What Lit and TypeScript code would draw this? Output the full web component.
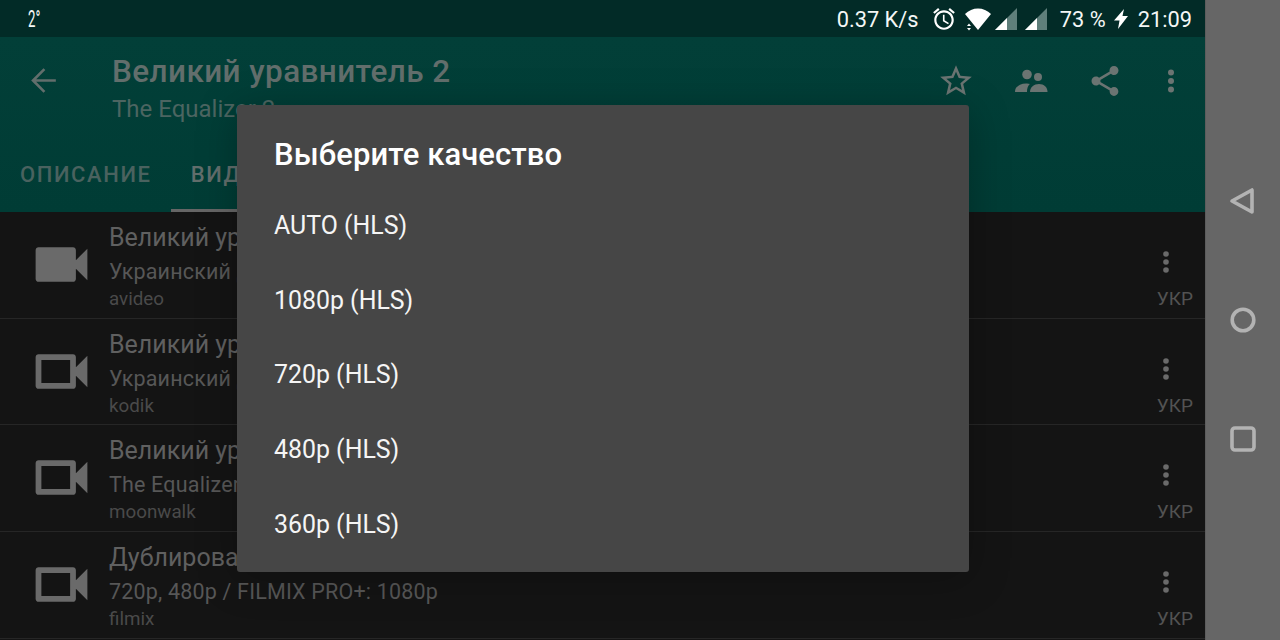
import { LitElement, html, css, svg } from "lit";
import { customElement } from "lit/decorators.js";

const CAM_FILLED = "M17 10.5V7c0-.55-.45-1-1-1H4c-.55 0-1 .45-1 1v10c0 .55.45 1 1 1h12c.55 0 1-.45 1-1v-3.5l4 4v-11l-4 4z";
const CAM_OUTLINE = CAM_FILLED + "M15 16H5V8h10v8z";

const rows = [
  { t: "Великий уравнитель 2", s: "Украинский дубляж", src: "avideo", icon: CAM_FILLED },
  { t: "Великий уравнитель 2", s: "Украинский дубляж", src: "kodik", icon: CAM_OUTLINE },
  { t: "Великий уравнитель 2", s: "The Equalizer 2", src: "moonwalk", icon: CAM_OUTLINE },
  { t: "Дублированный", s: "720p, 480p / FILMIX PRO+: 1080p", src: "filmix", icon: CAM_OUTLINE },
];
const options = ["AUTO (HLS)", "1080p (HLS)", "720p (HLS)", "480p (HLS)", "360p (HLS)"];

const signal = svg`<svg class="sig" viewBox="0 0 22 22"><path d="M22 0V22H0Z" fill="#5f7f7b"/><path d="M12 10V22H0Z" fill="#fff"/></svg>`;

@customElement("app-root")
export class AppRoot extends LitElement {
  static styles = css`
    :host { display: block; width: 1280px; height: 640px; overflow: hidden; position: relative; font-family: Roboto, "Noto Sans", sans-serif; background: #141414; }
    .app { display: flex; height: 640px; }
    .main { width: 1205px; display: flex; flex-direction: column; }
    .status { height: 37px; box-sizing: border-box; background: #022b27; color: #f4f7f6; display: flex; align-items: center; padding: 1px 13px 0 28px; font-size: 21.8px; }
    .temp { font-size: 24px; transform: scaleX(.55); transform-origin: left center; width: 20px; }
    .spacer { flex: 1; }
    .speed { width: 82px; white-space: nowrap; margin-right: 12px; }
    .alarm { width: 26px; height: 26px; margin-right: 7px; }
    .wifi { width: 28px; height: 24px; margin-right: 3px; }
    .sig { width: 22px; height: 22px; margin-right: 8px; }
    .batt { margin-left: 5px; white-space: nowrap; width: 46px; }
    .bolt { width: 16px; height: 22px; margin: 0 9px 0 7px; }
    .bar { height: 175px; background: linear-gradient(#023f38, #003c35); display: flex; flex-direction: column; }
    .top { height: 118px; display: flex; align-items: flex-start; }
    .back { width: 37px; height: 37px; margin: 25px 50px 0 25px; }
    .titles { flex: 1; padding-top: 15px; }
    .title { font-size: 31.5px; font-weight: 500; line-height: 40px; color: #626e6c; letter-spacing: .4px; white-space: nowrap; }
    .sub { font-size: 24px; line-height: 34px; color: #4c6561; white-space: nowrap; }
    .actions { display: flex; align-items: center; margin-top: 25px; padding-right: 30px; }
    .tabs { height: 57px; display: flex; padding-left: 20px; gap: 39px; align-items: stretch; }
    .tab { font-size: 22px; font-weight: 500; letter-spacing: 1.6px; color: #4a625f; line-height: 40px; }
    .tab.on { color: #626e6c; border-bottom: 3px solid #666; margin-left: -20px; padding-left: 20px; width: 130px; height: 54px; white-space: nowrap; }
    .list { flex: 1; display: flex; flex-direction: column; }
    .row { height: 106.67px; box-sizing: border-box; border-bottom: 1px solid #262626; display: flex; flex: none; }
    .cam { width: 69px; height: 69px; margin: 18px 13px 0 27px; flex: none; }
    .texts { flex: 1; padding-top: 8px; min-width: 0; }
    .rt { font-size: 25px; line-height: 35px; color: #606060; white-space: nowrap; }
    .rs { font-size: 21.5px; line-height: 33px; color: #575757; white-space: nowrap; letter-spacing: .18px; }
    .src { font-size: 18.8px; line-height: 22px; color: #4a4a4a; white-space: nowrap; }
    .right { width: 78px; padding-right: 12px; box-sizing: border-box; display: flex; flex-direction: column; align-items: flex-end; flex: none; }
    .dots { width: 8px; height: 24px; margin: 38px 23px 0 0; }
    .lang { font-size: 19px; line-height: 22px; color: #525252; margin-top: 14px; }
    .nav { width: 75px; background: #666; display: flex; flex-direction: column; align-items: center; border-left: 1px solid #5c5c5c; box-sizing: border-box; padding-top: 184px; gap: 85px; }
    .nav svg { width: 34px; height: 34px; display: block; }
    .dialog { position: absolute; left: 237px; top: 105px; width: 732px; height: 467px; background: #464646; border-radius: 3px; box-sizing: border-box; padding: 28px 37px 0; color: #fff; box-shadow: 0 6px 40px rgba(0,0,0,.25); }
    .dlg-title { font-size: 31px; font-weight: 500; line-height: 44px; margin-bottom: 12px; letter-spacing: .1px; }
    .opt { font-size: 24.9px; line-height: 74.7px; height: 74.7px; color: #f5f5f5; }
    .a-star { width: 38px; height: 38px; margin-right: 39px; }
    .a-people { width: 34px; height: 24px; margin-right: 39px; }
    .a-share { width: 36px; height: 36px; margin-right: 44px; }
    .a-more { width: 8px; height: 26px; }
  `;

  private dotsIcon(color: string) {
    return svg`<svg class="dots" viewBox="0 0 8 24"><g fill="${color}"><circle cx="4" cy="4" r="2.8"/><circle cx="4" cy="12" r="2.8"/><circle cx="4" cy="20" r="2.8"/></g></svg>`;
  }

  render() {
    return html`
      <div class="app">
        <div class="main">
          <div class="status">
            <span class="temp">2°</span>
            <span class="spacer"></span>
            <span class="speed">0.37 K/s</span>
            <svg class="alarm" viewBox="0 0 24 24" fill="#fff"><path d="M22 5.72l-4.6-3.86-1.29 1.53 4.6 3.86L22 5.72zM7.88 3.39 6.6 1.86 2 5.71l1.29 1.53 4.59-3.85zM12.5 8H11v6l4.75 2.85.75-1.23-4-2.37V8zM12 4c-4.97 0-9 4.03-9 9s4.03 9 9 9 9-4.03 9-9-4.03-9-9-9zm0 16c-3.87 0-7-3.13-7-7s3.13-7 7-7 7 3.13 7 7-3.13 7-7 7z"/></svg>
            <svg class="wifi" viewBox="0 0 28 24"><path fill="#fff" d="M1 7C8-.5 20-.5 27 7L14 23Z"/><path fill="#fff" d="M3 19l2-2.4L7 19zM3 21h4l-2 2.4z"/></svg>
            ${signal}${signal}
            <span class="batt">73 %</span>
            <svg class="bolt" viewBox="0 0 16 22"><path fill="#fff" d="M11 1 9.5 8H15L5 21 6.5 12.5H1Z"/></svg>
            <span>21:09</span>
          </div>
          <div class="bar">
            <div class="top">
              <svg class="back" viewBox="0 0 24 24"><path fill="none" stroke="#626e6c" stroke-width="1.7" d="M20 12H5.500M12.600 4.600 5.200 12l7.400 7.400"/></svg>
              <div class="titles">
                <div class="title">Великий уравнитель 2</div>
                <div class="sub">The Equalizer 2</div>
              </div>
              <div class="actions">
                <svg class="a-star" viewBox="0 0 24 24"><path fill="#6b7472" d="M22 9.24l-7.19-.62L12 2 9.19 8.63 2 9.24l5.46 4.73L5.82 21 12 17.27 18.18 21l-1.63-7.03L22 9.24zM12 15.4l-3.76 2.27 1-4.28-3.32-2.88 4.38-.38L12 6.1l1.71 4.04 4.38.38-3.32 2.88 1 4.28L12 15.4z"/></svg>
                <svg class="a-people" viewBox="-1 0 34 24"><g fill="#6b7472"><circle cx="12" cy="5.500" r="4.800"/><circle cx="23" cy="8" r="4"/><path d="M0 23C0 17.500 5 14.500 11 14.500 12.500 14.500 14 14.700 14.800 15 12.500 17 12 20 12 23Z"/><path d="M15 23C15 18 19 15 24 15 29 15 32.500 18 32.500 23Z"/></g></svg>
                <svg class="a-share" viewBox="0 0 24 24"><path fill="#6b7472" d="M18 16.08c-.76 0-1.44.3-1.96.77L8.91 12.7c.05-.23.09-.46.09-.7s-.04-.47-.09-.7l7.05-4.11c.54.5 1.25.81 2.04.81 1.66 0 3-1.34 3-3s-1.34-3-3-3-3 1.34-3 3c0 .24.04.47.09.7L8.04 9.81C7.5 9.31 6.79 9 6 9c-1.66 0-3 1.34-3 3s1.34 3 3 3c.79 0 1.5-.31 2.04-.81l7.12 4.16c-.05.21-.08.43-.08.65 0 1.61 1.31 2.92 2.92 2.92 1.61 0 2.92-1.31 2.92-2.92s-1.31-2.92-2.92-2.92z"/></svg>
                <svg class="a-more" viewBox="0 0 8 24"><g fill="#6b7472"><circle cx="4" cy="3.5" r="3"/><circle cx="4" cy="12" r="3"/><circle cx="4" cy="20.5" r="3"/></g></svg>
              </div>
            </div>
            <div class="tabs">
              <div class="tab">ОПИСАНИЕ</div>
              <div class="tab on">ВИДЕО</div>
            </div>
          </div>
          <div class="list">
            ${rows.map(
              (r) => html`
                <div class="row">
                  <svg class="cam" viewBox="0 0 24 24"><path fill="#6a6a6a" fill-rule="evenodd" d="${r.icon}"/></svg>
                  <div class="texts">
                    <div class="rt">${r.t}</div>
                    <div class="rs">${r.s}</div>
                    <div class="src">${r.src}</div>
                  </div>
                  <div class="right">
                    ${this.dotsIcon("#6a6a6a")}
                    <div class="lang">УКР</div>
                  </div>
                </div>
              `
            )}
          </div>
        </div>
        <div class="nav">
          <svg viewBox="0 0 34 34"><path fill="none" stroke="#b3b3b3" stroke-width="3.6" stroke-linejoin="round" d="M26 6V28L6 17Z"/></svg>
          <svg viewBox="0 0 34 34"><circle cx="17" cy="17" r="10.8" fill="none" stroke="#b3b3b3" stroke-width="3.6"/></svg>
          <svg viewBox="0 0 34 34"><rect x="6" y="6" width="22" height="22" rx="3" fill="none" stroke="#b3b3b3" stroke-width="3.6"/></svg>
        </div>
      </div>
      <div class="dialog">
        <div class="dlg-title">Выберите качество</div>
        ${options.map((o) => html`<div class="opt">${o}</div>`)}
      </div>
    `;
  }
}
